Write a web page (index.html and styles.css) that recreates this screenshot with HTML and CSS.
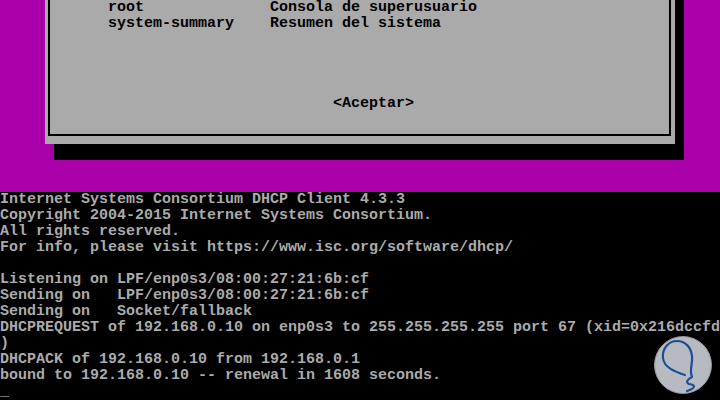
FILE: index.html
```html
<!DOCTYPE html>
<html lang="es">
<head>
    <meta charset="UTF-8">
    <title>Consola</title>
    <link rel="stylesheet" href="styles.css">
</head>
<body>
    <div class="screen">
        <div class="backdrop">
            <div class="dialog">
                <div class="frame">
<pre class="menu">root              Consola de superusuario
system-summary    Resumen del sistema</pre>
<pre class="buttons">                         &lt;Aceptar&gt;</pre>
                </div>
            </div>
        </div>

<pre class="console">Internet Systems Consortium DHCP Client 4.3.3
Copyright 2004-2015 Internet Systems Consortium.
All rights reserved.
For info, please visit https://www.isc.org/software/dhcp/

Listening on LPF/enp0s3/08:00:27:21:6b:cf
Sending on   LPF/enp0s3/08:00:27:21:6b:cf
Sending on   Socket/fallback
DHCPREQUEST of 192.168.0.10 on enp0s3 to 255.255.255.255 port 67 (xid=0x216dccfd
)
DHCPACK of 192.168.0.10 from 192.168.0.1
bound to 192.168.0.10 -- renewal in 1608 seconds.
<span class="cursor">_</span></pre>

        <div class="watermark">
            <svg width="58" height="58" viewBox="0 0 58 58">
                <circle cx="29" cy="29" r="28.5" fill="#b7bac1" stroke="#8f939b" stroke-width="1"/>
                <path d="M31 39 C22 36 10 32 9 22 C8 12 15 5 23 5 C31 5 37 11 38 20 C39 28 35 33 38 41 C34 43 31 46 35 48 C41 49 43 51 33 55"
                      fill="none" stroke="#1d4d98" stroke-width="2.2" stroke-linecap="round" stroke-linejoin="round"/>
            </svg>
        </div>
    </div>
</body>
</html>
```

FILE: styles.css
```css
:root {
    --vga-magenta: #aa00aa;
    --vga-grey: #aaaaaa;
    --vga-black: #000000;
    --cell-w: 9px;
    --cell-h: 16px;
}

* {
    margin: 0;
    padding: 0;
    box-sizing: border-box;
}

body {
    background: var(--vga-black);
    font-family: 'Liberation Mono', 'DejaVu Sans Mono', monospace;
}

pre {
    font-family: inherit;
    font-size: 15px;
    line-height: var(--cell-h);
    font-weight: bold;
    white-space: pre;
}

.screen {
    position: relative;
    width: 720px;
    height: 400px;
    overflow: hidden;
    background: var(--vga-black);
}

/* top half: dialog on magenta */
.backdrop {
    height: 192px;
    background: var(--vga-magenta);
    padding-left: 45px;
}

.dialog {
    width: 630px;
    height: 144px;
    background: var(--vga-grey);
    padding: 0 4px 8px 3px;
    box-shadow: 9px 16px 0 var(--vga-black), 9px 0 0 var(--vga-black);
}

.frame {
    height: 100%;
    border: 2px solid var(--vga-black);
    border-top: none;
    padding-left: 58px;
    color: var(--vga-black);
}

.buttons {
    margin-top: 64px;
}

/* bottom half: dhclient output */
.console {
    color: #ababab;
}

.cursor {
    color: #c8c8c8;
}

.watermark {
    position: absolute;
    left: 654px;
    top: 336px;
    width: 58px;
    height: 58px;
}

.watermark svg {
    display: block;
}
```
